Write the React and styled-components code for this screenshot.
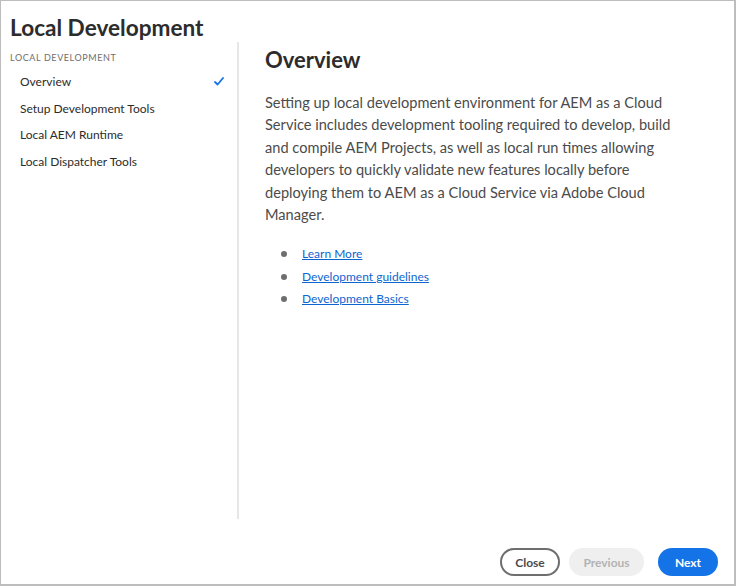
import React from 'react'
import styled, { createGlobalStyle } from 'styled-components'

const GlobalStyle = createGlobalStyle`
  * { box-sizing: border-box; }
  body {
    margin: 0;
    background: #fff;
    font-family: Lato, "Liberation Sans", sans-serif;
  }
`

const Frame = styled.div`
  width: 736px;
  height: 586px;
  border: 1px solid #bdbdbd;
  border-right-width: 2px;
  border-bottom-width: 2px;
  display: flex;
  flex-direction: column;
  background: #fff;
`

const Title = styled.h1`
  margin: 0;
  padding: 12px 0 0 9px;
  height: 41px;
  font-size: 22.6px;
  font-weight: 700;
  color: #2c2c2c;
  line-height: 30px;
`

const Body = styled.div`
  display: flex;
  height: 477px;
`

const Sidebar = styled.nav`
  width: 238px;
  border-right: 2px solid #e6e6e6;
  padding: 10px 12px 0 9px;
`

const SideHeading = styled.div`
  font-size: 9px;
  letter-spacing: 0.6px;
  color: #6e6e6e;
  text-transform: uppercase;
  height: 16px;
`

const NavItem = styled.div`
  display: flex;
  align-items: center;
  justify-content: space-between;
  height: 26.7px;
  padding: 0 1px 0 10px;
  font-size: 12px;
  color: #2c2c2c;
`

const Content = styled.section`
  flex: 1;
  padding: 3px 40px 0 26px;
`

const Heading = styled.h2`
  margin: 0;
  font-size: 22px;
  font-weight: 700;
  color: #2c2c2c;
  line-height: 30px;
`

const Para = styled.p`
  margin: 17px 0 0;
  font-size: 14.6px;
  line-height: 22.4px;
  color: #4b4b4b;
  max-width: 412px;
`

const Links = styled.ul`
  margin: 17px 0 0;
  padding-left: 37px;
  list-style: none;
`

const LinkItem = styled.li`
  position: relative;
  font-size: 12px;
  line-height: 22.5px;
  &::before {
    content: '';
    position: absolute;
    left: -21px;
    top: 8px;
    width: 6px;
    height: 6px;
    border-radius: 50%;
    background: #6e6e6e;
  }
  a {
    color: #0d66d0;
    text-decoration: underline;
  }
`

const Footer = styled.footer`
  flex: 1;
  display: flex;
  justify-content: flex-end;
  align-items: flex-end;
  gap: 9px;
  padding: 0 16px 8px 0;
`

const Button = styled.button`
  height: 28px;
  width: ${p => p.$w}px;
  padding: 0;
  border-radius: 14px;
  font-family: inherit;
  font-size: 12px;
  font-weight: 700;
  border: 2px solid ${p => p.$variant === 'outline' ? '#6e6e6e' : 'transparent'};
  background: ${p => p.$variant === 'primary' ? '#1473e6' : p.$variant === 'disabled' ? '#efefef' : '#fff'};
  color: ${p => p.$variant === 'primary' ? '#fff' : p.$variant === 'disabled' ? '#b3b3b3' : '#4b4b4b'};
  margin-left: ${p => p.$gap || 0}px;
`

const Check = () => (
  <svg width="10" height="9" viewBox="0 0 10 9">
    <path d="M1 5 L3.6 7.5 L9 1" fill="none" stroke="#1473e6" strokeWidth="1.8" strokeLinecap="round" strokeLinejoin="round" />
  </svg>
)

const navItems = ['Overview', 'Setup Development Tools', 'Local AEM Runtime', 'Local Dispatcher Tools']

export default function App() {
  return (
    <>
      <GlobalStyle />
      <Frame>
        <Title>Local Development</Title>
        <Body>
          <Sidebar>
            <SideHeading>Local Development</SideHeading>
            {navItems.map((n, i) => (
              <NavItem key={n}>
                {n}
                {i === 0 && <Check />}
              </NavItem>
            ))}
          </Sidebar>
          <Content>
            <Heading>Overview</Heading>
            <Para>
              Setting up local development environment for AEM as a Cloud Service includes development tooling required to develop, build and compile AEM Projects, as well as local run times allowing developers to quickly validate new features locally before deploying them to AEM as a Cloud Service via Adobe Cloud Manager.
            </Para>
            <Links>
              <LinkItem><a href="#">Learn More</a></LinkItem>
              <LinkItem><a href="#">Development guidelines</a></LinkItem>
              <LinkItem><a href="#">Development Basics</a></LinkItem>
            </Links>
          </Content>
        </Body>
        <Footer>
          <Button $variant="outline" $w={60}>Close</Button>
          <Button $variant="disabled" $w={75}>Previous</Button>
          <Button $variant="primary" $w={60} $gap={5}>Next</Button>
        </Footer>
      </Frame>
    </>
  )
}
